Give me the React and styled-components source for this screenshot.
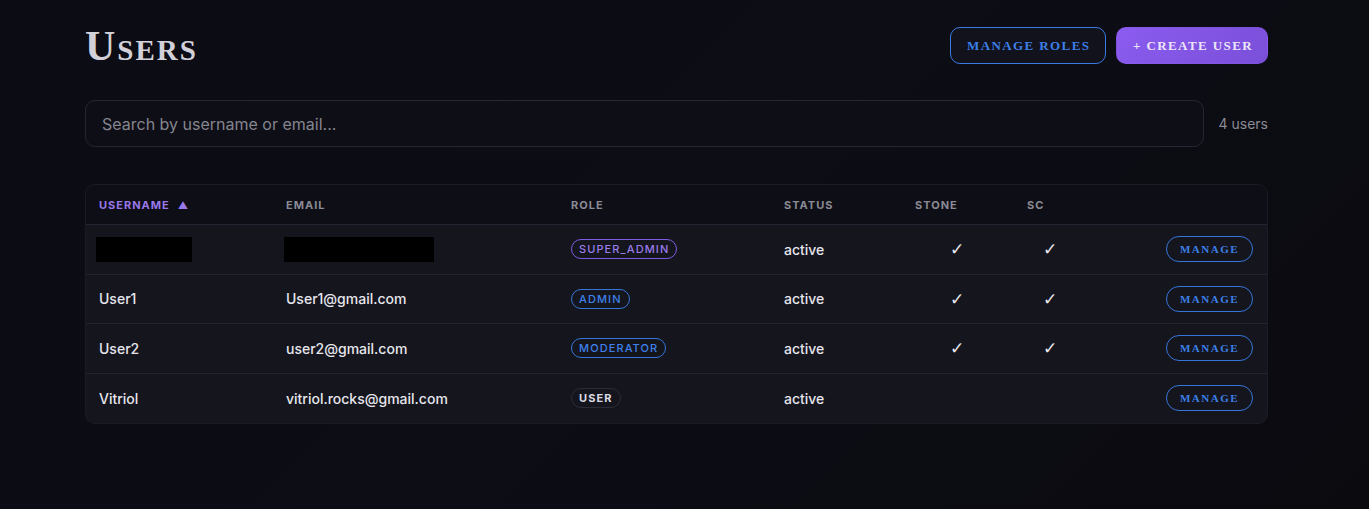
import React, { useState } from 'react';
import styled, { createGlobalStyle } from 'styled-components';

const GlobalStyle = createGlobalStyle`
    * { box-sizing: border-box; }
    html, body {
        margin: 0;
        padding: 0;
        background: #0b0b11;
    }
    body {
        font-family: Inter, "Noto Sans", sans-serif;
        color: #e6e6ec;
    }
`;

const Page = styled.div`
    min-height: 509px;
    background: linear-gradient(135deg, #0c0c14 0%, #0d0d16 50%, #0a0a0f 100%);
    padding: 26px 101px 40px 85px;
`;

const Header = styled.div`
    display: flex;
    align-items: center;
    justify-content: space-between;
    height: 39px;
`;

const Title = styled.h1`
    margin: 0;
    font-family: "Liberation Serif", "DejaVu Serif", serif;
    font-variant: small-caps;
    font-weight: 700;
    font-size: 42px;
    letter-spacing: 2px;
    color: #d2d1d9;
    line-height: 1;
`;

const Actions = styled.div`
    display: flex;
    gap: 10px;
`;

const serifCaps = `
    font-family: "Liberation Serif", "DejaVu Serif", serif;
    font-weight: 700;
    text-transform: uppercase;
    white-space: nowrap;
    cursor: pointer;
`;

const HeadButton = styled.button`
    ${serifCaps}
    height: 37px;
    padding: 0 16px;
    border-radius: 10px;
    font-size: 13px;
    letter-spacing: 1.4px;
    border: 1px solid ${p => (p.$primary ? 'transparent' : '#3a7be0')};
    color: ${p => (p.$primary ? '#ece6fa' : '#3c7fe6')};
    background: ${p => (p.$primary ? 'linear-gradient(135deg, #8b5cf0, #7a4fd8)' : '#12121c')};
    width: ${p => p.$w}px;
`;

const SearchRow = styled.div`
    display: flex;
    align-items: center;
    gap: 15px;
    margin-top: 35px;
`;

const Search = styled.input`
    flex: 1;
    height: 47px;
    border-radius: 10px;
    border: 1px solid #272734;
    background: #0e0e16;
    padding: 0 16px;
    font-family: Inter, sans-serif;
    font-size: 16px;
    color: #e6e6ec;
    outline: none;
    &::placeholder { color: #85858f; }
`;

const Count = styled.span`
    font-size: 14px;
    color: #8a8a94;
    white-space: nowrap;
`;

const Table = styled.div`
    margin-top: 37px;
    border-radius: 10px;
    overflow: hidden;
    background: #15151e;
    border: 1px solid #1b1b25;
`;

const cols = '186px 285px 213px 131px 112px 74px 1fr';

const HeadRow = styled.div`
    display: grid;
    grid-template-columns: ${cols};
    height: 40px;
    align-items: center;
    background: #0e0e16;
    border-bottom: 1px solid #242432;
`;

const HeadCell = styled.div`
    padding: 0 14px;
    font-size: 11px;
    font-weight: 700;
    letter-spacing: 1px;
    text-transform: uppercase;
    color: ${p => (p.$active ? '#9a78ea' : '#8a8a95')};
    &:first-child { padding-left: 13px; }
`;

const Arrow = styled.span`
    margin-left: 8px;
    font-size: 10px;
`;

const Row = styled.div`
    display: grid;
    grid-template-columns: ${cols};
    height: 49.5px;
    align-items: center;
    border-bottom: 1px solid #222230;
    &:last-child { border-bottom: none; }
`;

const Cell = styled.div`
    padding: 0 14px;
    font-size: 14px;
    font-weight: 500;
    color: #e6e6ec;
    text-align: ${p => p.$align || 'left'};
    &:first-child { padding-left: 13px; }
`;

const Redacted = styled.div`
    background: #000;
    height: 25px;
    width: ${p => p.$w}px;
    margin-left: ${p => p.$ml}px;
`;

const roleColors = {
    SUPER_ADMIN: { border: '#7d5ce2', color: '#9a7cea' },
    ADMIN: { border: '#3676d8', color: '#3d82ea' },
    MODERATOR: { border: '#3676d8', color: '#3d82ea' },
    USER: { border: '#2c2c38', color: '#dcdce4' },
};

const Badge = styled.span`
    display: inline-flex;
    align-items: center;
    height: 20px;
    padding: 0 7px;
    border-radius: 10px;
    font-size: 11px;
    font-weight: ${p => (p.$role === 'USER' ? 700 : 500)};
    letter-spacing: 1.1px;
    border: 1px solid ${p => roleColors[p.$role].border};
    color: ${p => roleColors[p.$role].color};
`;

const Check = styled.span`
    font-family: "DejaVu Sans", sans-serif;
    font-size: 17px;
    color: #e8e8ee;
`;

const ManageButton = styled.button`
    ${serifCaps}
    height: 26px;
    width: 87px;
    border-radius: 13px;
    background: transparent;
    border: 1px solid #3676d8;
    color: #3c7fe6;
    font-size: 11px;
    letter-spacing: 1.5px;
    padding: 0;
`;

const users = [
    { redacted: true, role: 'SUPER_ADMIN', status: 'active', stone: true, sc: true },
    { username: 'User1', email: 'User1@gmail.com', role: 'ADMIN', status: 'active', stone: true, sc: true },
    { username: 'User2', email: 'user2@gmail.com', role: 'MODERATOR', status: 'active', stone: true, sc: true },
    { username: 'Vitriol', email: 'vitriol.rocks@gmail.com', role: 'USER', status: 'active', stone: false, sc: false },
];

export default function App() {
    const [query, setQuery] = useState('');

    return (
        <Page>
            <GlobalStyle />
            <Header>
                <Title>Users</Title>
                <Actions>
                    <HeadButton $w={156}>Manage Roles</HeadButton>
                    <HeadButton $primary $w={152}>+ Create User</HeadButton>
                </Actions>
            </Header>

            <SearchRow>
                <Search
                    placeholder="Search by username or email..."
                    value={query}
                    onChange={ev => setQuery(ev.target.value)}
                />
                <Count>{users.length} users</Count>
            </SearchRow>

            <Table>
                <HeadRow>
                    <HeadCell $active>Username<Arrow>▲</Arrow></HeadCell>
                    <HeadCell>Email</HeadCell>
                    <HeadCell>Role</HeadCell>
                    <HeadCell>Status</HeadCell>
                    <HeadCell>Stone</HeadCell>
                    <HeadCell>SC</HeadCell>
                    <HeadCell />
                </HeadRow>
                {users.map((u, i) => (
                    <Row key={i}>
                        <Cell>{u.redacted ? <Redacted $w={96} $ml={-3} /> : u.username}</Cell>
                        <Cell>{u.redacted ? <Redacted $w={150} $ml={-2} /> : u.email}</Cell>
                        <Cell><Badge $role={u.role}>{u.role}</Badge></Cell>
                        <Cell>{u.status}</Cell>
                        <Cell $align="center">{u.stone && <Check>✓</Check>}</Cell>
                        <Cell $align="center">{u.sc && <Check>✓</Check>}</Cell>
                        <Cell $align="right"><ManageButton>Manage</ManageButton></Cell>
                    </Row>
                ))}
            </Table>
        </Page>
    );
}
